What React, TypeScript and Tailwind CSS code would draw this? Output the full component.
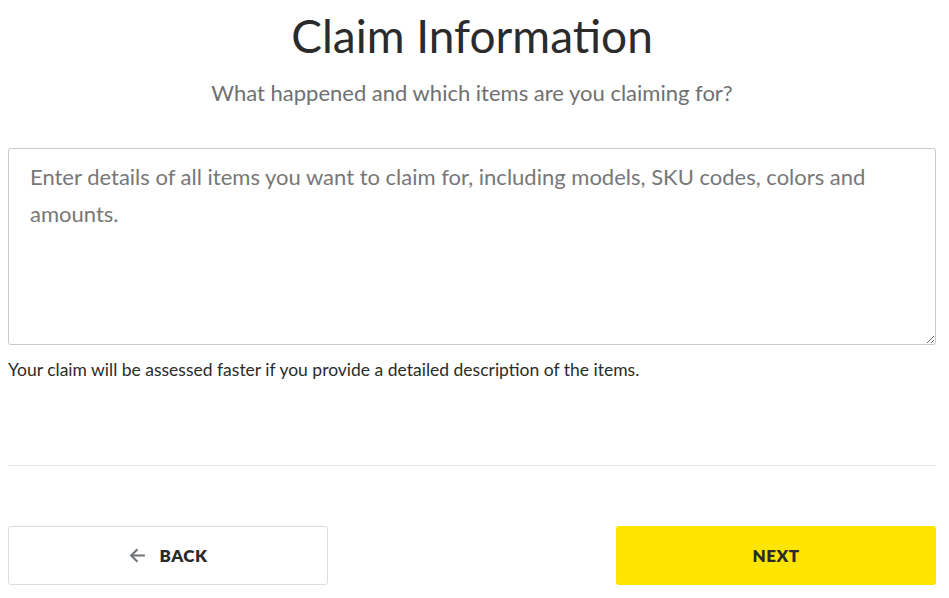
import React, { useState } from 'react';

const ClaimInformation: React.FC = () => {
  const [details, setDetails] = useState('');

  return (
    <div className="min-h-screen bg-white" style={{ fontFamily: 'Lato, "Open Sans", sans-serif' }}>
      <div className="ml-2 w-[928px]">
        {/* Header */}
        <h1 className="pt-[8px] text-center text-[46px] leading-[56px] font-normal text-[#2b2b2b]">
          Claim Information
        </h1>
        <p className="mt-[15px] text-center text-[22px] leading-[28px] text-[#707070]">
          What happened and which items are you claiming for?
        </p>

        {/* Details */}
        <textarea
          value={details}
          onChange={(e) => setDetails(e.target.value)}
          placeholder="Enter details of all items you want to claim for, including models, SKU codes, colors and amounts."
          className="mt-[41px] block h-[197px] w-full resize-y rounded-[3px] border border-[#c9c9c9] px-[21px] pt-[9px] pb-[12px] text-[22px] leading-[37px] text-[#2b2b2b] placeholder:text-[#777] outline-none"
        />
        <p className="mt-[14px] text-[17.5px] leading-[22px] text-[#2b2b2b]">
          Your claim will be assessed faster if you provide a detailed description of the items.
        </p>

        <hr className="mt-[84px] border-t border-[#e6e6e6]" />

        {/* Actions */}
        <div className="mt-[60px] flex justify-between">
          <button className="flex h-[59px] w-[320px] items-center justify-center gap-[12px] rounded-[3px] border border-[#dcdcdc] bg-white">
            <svg width="19" height="19" viewBox="0 0 24 24" fill="none" stroke="#6f7276" strokeWidth="2.6" strokeLinecap="square">
              <path d="M20 12H5" />
              <path d="M11 5l-7 7 7 7" />
            </svg>
            <span className="text-[17px] font-extrabold tracking-[0.5px] text-[#2b2b2b]">BACK</span>
          </button>
          <button className="flex h-[59px] w-[320px] items-center justify-center rounded-[3px] bg-[#ffe500]">
            <span className="text-[17px] font-extrabold tracking-[0.5px] text-[#2b2b2b]">NEXT</span>
          </button>
        </div>
      </div>
    </div>
  );
};

export default function App() {
  return <ClaimInformation />;
}
